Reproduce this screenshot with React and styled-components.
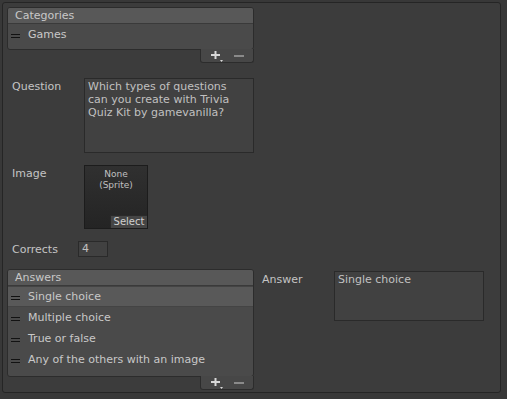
import React from 'react';
import styled, { createGlobalStyle } from 'styled-components';

const Global = createGlobalStyle`
  html, body {
    margin: 0;
    background: #383838;
  }
  body {
    font-family: "DejaVu Sans", sans-serif;
    font-size: 11px;
    color: #c4c4c4;
  }
`;

const Panel = styled.div`
  margin: 2px;
  width: 499px;
  height: 391px;
  box-sizing: border-box;
  border: 1px solid #252525;
  border-radius: 3px;
  background: #3c3c3c;
  padding: 4px;
  display: flex;
  flex-direction: column;
`;

const ListWrap = styled.div`
  width: 247px;
  flex: none;
  display: flex;
  flex-direction: column;
`;

const ListBox = styled.div`
  border: 1px solid #2c2c2c;
  border-radius: 3px;
  overflow: hidden;
  background: #4a4a4a;
`;

const ListHeader = styled.div`
  height: 15px;
  line-height: 15px;
  padding-left: 7px;
  background: #585858;
  border-bottom: 1px solid #3a3a3a;
  color: #c8c8c8;
`;

const ListBody = styled.div`
  padding: ${p => p.$pad};
`;

const Item = styled.div`
  height: 21px;
  display: flex;
  align-items: center;
  gap: 8px;
  padding-left: 3px;
  box-sizing: border-box;
  background: ${p => (p.$selected ? '#595959' : 'transparent')};
  border-top: 1px solid ${p => (p.$selected ? '#444' : 'transparent')};
  border-bottom: 1px solid ${p => (p.$selected ? '#444' : 'transparent')};
  color: #c8c8c8;
`;

const Handle = styled.span`
  width: 9px;
  height: 4px;
  margin-top: 3px;
  border-top: 1px solid #121212;
  border-bottom: 1px solid #121212;
  box-sizing: border-box;
`;

const Footer = styled.div`
  align-self: flex-end;
  width: 54px;
  height: 14px;
  margin-top: -1px;
  background: #474747;
  border: 1px solid #2c2c2c;
  border-top: none;
  border-radius: 0 0 3px 3px;
  display: flex;
  align-items: center;
  justify-content: space-around;
  padding: 0 4px;
  box-sizing: border-box;
`;

const Row = styled.div`
  display: flex;
  align-items: flex-start;
  padding-left: ${p => (p.$flush ? 0 : 5)}px;
  margin-top: ${p => p.$mt}px;
`;

const Label = styled.div`
  width: ${p => p.$w || 72}px;
  flex: none;
  padding-top: 2px;
  color: #c4c4c4;
`;

const TextArea = styled.div`
  width: ${p => p.$w}px;
  height: ${p => p.$h}px;
  box-sizing: border-box;
  background: #414141;
  border: 1px solid #2a2a2a;
  padding: 1px 3px;
  line-height: 13px;
  color: #c0c0c0;
`;

const SpriteBox = styled.div`
  width: 64px;
  height: 64px;
  box-sizing: border-box;
  border: 1px solid #1c1c1c;
  background: linear-gradient(#303030, #242424);
  display: flex;
  flex-direction: column;
  align-items: center;
  font-size: 9px;
  line-height: 11px;
  color: #c0c0c0;
  padding-top: 3px;
`;

const SelectBtn = styled.div`
  margin-top: auto;
  align-self: flex-end;
  width: 36px;
  height: 12px;
  line-height: 12px;
  text-align: center;
  background: #454545;
  border-top: 1px solid #2a2a2a;
  border-left: 1px solid #2a2a2a;
  color: #d0d0d0;
  font-size: 10px;
`;

const NumField = styled.div`
  width: 30px;
  height: 16px;
  box-sizing: border-box;
  background: #414141;
  border: 1px solid #2a2a2a;
  padding-left: 3px;
  line-height: 14px;
  color: #c0c0c0;
`;

const Bottom = styled.div`
  display: flex;
  gap: 8px;
  margin-top: 12px;
`;

const Plus = () => (
  <svg width="14" height="12" viewBox="0 0 14 12">
    <path d="M1 5h9M5.5 1v8" stroke="#d8d8d8" strokeWidth="2" />
    <path d="M10 10h3l-1.5 2z" fill="#d8d8d8" />
  </svg>
);

const Minus = () => (
  <svg width="10" height="8" viewBox="0 0 10 8">
    <path d="M0 4h10" stroke="#8a8a8a" strokeWidth="2" />
  </svg>
);

const ReorderList = ({ title, items, selected, pad }) => (
  <ListWrap>
    <ListBox>
      <ListHeader>{title}</ListHeader>
      <ListBody $pad={pad}>
        {items.map((it, i) => (
          <Item key={it} $selected={i === selected}>
            <Handle />
            {it}
          </Item>
        ))}
      </ListBody>
    </ListBox>
    <Footer>
      <Plus />
      <Minus />
    </Footer>
  </ListWrap>
);

export default function App() {
  return (
    <>
      <Global />
      <Panel>
        <ReorderList title="Categories" items={['Games']} selected={-1} pad="0 0 4px" />
        <Row $mt={15}>
          <Label>Question</Label>
          <TextArea $w={170} $h={75}>
            Which types of questions
            <br />
            can you create with Trivia
            <br />
            Quiz Kit by gamevanilla?
          </TextArea>
        </Row>
        <Row $mt={12}>
          <Label>Image</Label>
          <SpriteBox>
            <span>None</span>
            <span>(Sprite)</span>
            <SelectBtn>Select</SelectBtn>
          </SpriteBox>
        </Row>
        <Row $mt={12}>
          <Label $w={66}>Corrects</Label>
          <NumField>4</NumField>
        </Row>
        <Bottom>
          <ReorderList
            title="Answers"
            items={['Single choice', 'Multiple choice', 'True or false', 'Any of the others with an image']}
            selected={0}
            pad="0 0 6px"
          />
          <Row $mt={2} $flush>
            <Label>Answer</Label>
            <TextArea $w={150} $h={50}>Single choice</TextArea>
          </Row>
        </Bottom>
      </Panel>
    </>
  );
}
